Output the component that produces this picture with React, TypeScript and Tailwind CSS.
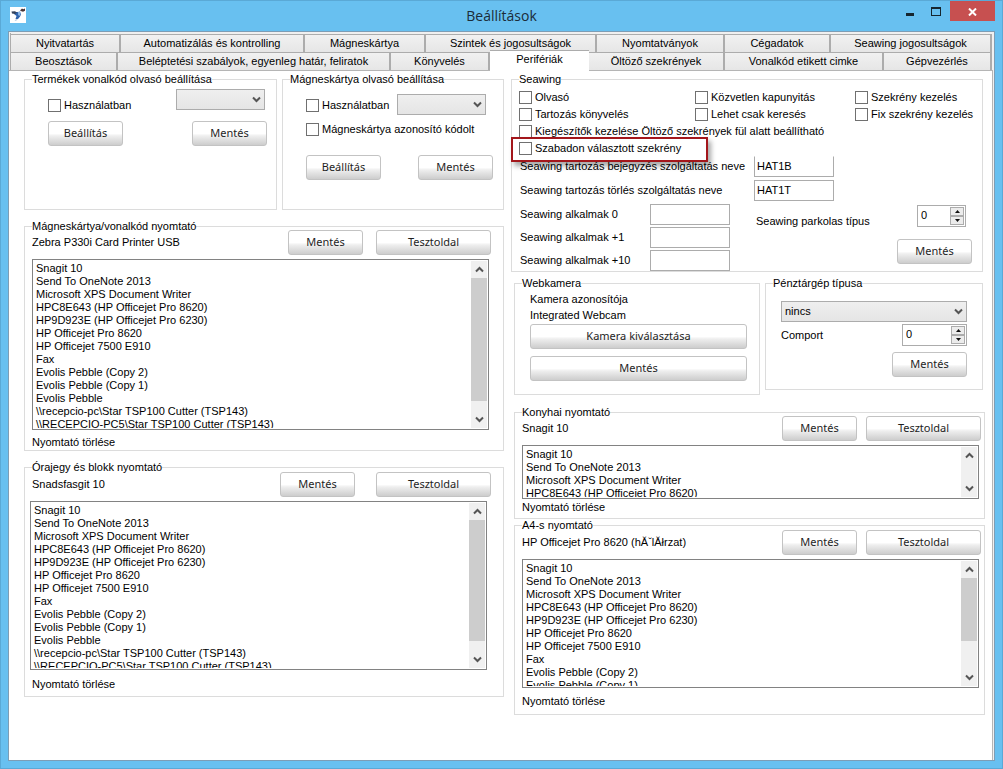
import { useId, type ReactNode } from 'react';
import clsx from 'clsx';

const PRINTERS = [
  'Snagit 10',
  'Send To OneNote 2013',
  'Microsoft XPS Document Writer',
  'HPC8E643 (HP Officejet Pro 8620)',
  'HP9D923E (HP Officejet Pro 6230)',
  'HP Officejet Pro 8620',
  'HP Officejet 7500 E910',
  'Fax',
  'Evolis Pebble (Copy 2)',
  'Evolis Pebble (Copy 1)',
  'Evolis Pebble',
  '\\\\recepcio-pc\\Star TSP100 Cutter (TSP143)',
  '\\\\RECEPCIO-PC5\\Star TSP100 Cutter (TSP143)',
];

const TOP_TABS = [
  'Nyitvatartás',
  'Automatizálás és kontrolling',
  'Mágneskártya',
  'Szintek és jogosultságok',
  'Nyomtatványok',
  'Cégadatok',
  'Seawing jogosultságok',
];

const BOTTOM_TABS = [
  'Beosztások',
  'Beléptetési szabályok, egyenleg határ, feliratok',
  'Könyvelés',
  'Perifériák',
  'Öltöző szekrények',
  'Vonalkód etikett cimke',
  'Gépvezérlés',
];

const ACTIVE_TAB = 'Perifériák';

function Tab({ name }: { name: string }) {
  const active = name === ACTIVE_TAB;
  return (
    <button
      type="button"
      role="tab"
      aria-selected={active}
      className={clsx(
        'truncate border-[#acacac]',
        active
          ? 'z-10 -mt-[2px] -mb-px border-t bg-white pb-[3px]'
          : 'border-t border-r-2 bg-linear-to-b from-[#f1f1f1] to-[#e6e6e6]',
      )}
    >
      {name}
    </button>
  );
}

function Group({
  title,
  className,
  children,
}: {
  title: string;
  className?: string;
  children: ReactNode;
}) {
  return (
    <fieldset className={clsx('min-w-0 border border-[#dcdcdc] pl-[7px]', className)}>
      <legend className="h-[13px] leading-[13px]">{title}</legend>
      {children}
    </fieldset>
  );
}

function PushButton({ className, children }: { className?: string; children: ReactNode }) {
  return (
    <button
      type="button"
      className={clsx(
        "h-[25px] shrink-0 rounded-[3px] border border-[#c3c3c3] bg-linear-to-b from-white from-50% via-[#efefef] via-60% to-[#cdcdcd] pb-[2px] font-['Noto_Sans','Open_Sans',sans-serif] text-[11px] text-[#1e1e1e]",
        className,
      )}
    >
      {children}
    </button>
  );
}

function Check({ label, className }: { label: string; className?: string }) {
  return (
    <label className={clsx('flex h-[13px] items-center gap-[3px] whitespace-nowrap', className)}>
      <input
        type="checkbox"
        className="size-[13px] shrink-0 appearance-none border border-[#707070] bg-white"
      />
      {label}
    </label>
  );
}

function Chevron({ up, className }: { up?: boolean; className?: string }) {
  return (
    <svg viewBox="0 0 9 7" className={clsx('h-[7px] w-[9px]', className)} aria-hidden="true">
      <path
        d={up ? 'M1 5.5 4.5 2 8 5.5' : 'M1 1.5 4.5 5 8 1.5'}
        fill="none"
        stroke="#555"
        strokeWidth="2"
      />
    </svg>
  );
}

function Dropdown({
  label,
  value,
  className,
}: {
  label: string;
  value: string;
  className?: string;
}) {
  return (
    <div className={clsx('relative h-[21px]', className)}>
      <select
        aria-label={label}
        defaultValue={value}
        className="block h-full w-full appearance-none border border-[#acacac] bg-linear-to-b from-[#efefef] to-[#e5e5e5] px-[3px]"
      >
        <option value={value}>{value}</option>
      </select>
      <Chevron className="pointer-events-none absolute top-[7px] right-1" />
    </div>
  );
}

function Spinner({ id, className }: { id: string; className?: string }) {
  return (
    <div className={clsx('flex h-[22px] border border-[#acacac] bg-white p-px', className)}>
      <input
        id={id}
        type="number"
        defaultValue={0}
        className="w-0 min-w-0 flex-1 appearance-none pb-[2px] pl-[2px] outline-none [-moz-appearance:textfield] [&::-webkit-inner-spin-button]:appearance-none"
      />
      <div className="flex w-[14px] flex-col">
        {['Növelés', 'Csökkentés'].map((name, i) => (
          <button
            key={name}
            type="button"
            aria-label={name}
            className="flex flex-1 items-center justify-center border border-[#acacac] bg-[#ececec]"
          >
            <svg viewBox="0 0 5 3" className="h-[3px] w-[5px]" aria-hidden="true">
              <path d={i === 0 ? 'M0 3 2.5 0 5 3z' : 'M0 0 2.5 3 5 0z'} fill="#111" />
            </svg>
          </button>
        ))}
      </div>
    </div>
  );
}

function TextField({ id, value = '', className }: { id: string; value?: string; className?: string }) {
  return (
    <input
      id={id}
      defaultValue={value}
      className={clsx(
        'h-[21px] w-20 border border-[#acacac] bg-white px-[2px] pb-px outline-none',
        className,
      )}
    />
  );
}

function PrinterList({
  label,
  className,
  thumb,
}: {
  label: string;
  className: string;
  thumb?: string;
}) {
  return (
    <div className={clsx('flex border border-[#828282] bg-white p-px', className)}>
      <select
        size={4}
        aria-label={label}
        className="h-full min-w-0 flex-1 appearance-none overflow-y-auto pt-px outline-none [scrollbar-width:none]"
      >
        {PRINTERS.map((p) => (
          <option key={p} className="h-[13px] min-h-0 p-0 pl-[2px] leading-[13px]">
            {p}
          </option>
        ))}
      </select>
      <div className="flex w-4 flex-col bg-[#f0f0f0]" aria-hidden="true">
        <div className="flex h-[17px] items-center justify-center">
          <Chevron up />
        </div>
        <div className={clsx('bg-[#cdcdcd]', thumb)} />
        <div className="mt-auto flex h-[17px] items-center justify-center">
          <Chevron />
        </div>
      </div>
    </div>
  );
}

function PrinterHeader({
  name,
  className,
  children,
}: {
  name: string;
  className?: string;
  children: ReactNode;
}) {
  return (
    <div className={clsx('flex items-center', className)}>
      <span className="flex-1 truncate">{name}</span>
      {children}
    </div>
  );
}

function TitleBar() {
  return (
    <header className="relative flex h-[31px] shrink-0 items-start justify-end">
      <svg viewBox="0 0 16 16" className="absolute top-[6px] left-[2px] size-4" aria-hidden="true">
        <path d="M0 0h16v16H0z" fill="#fff" />
        <path d="M4 5h5l2 1.500c0 2-1.500 4-3 5.500H5.500L6.500 9 4 7z" fill="#2f64ad" />
        <path d="M1.500 4.500 5 4.200l2 1.300L5 7 2 6.500z" fill="#34435c" />
        <path d="M8 5l2-1 .8 2L9.500 9 8.200 8z" fill="#8eb8e4" />
        <path d="M10 3.500l2-2 1.200.8L15 1.500v2.200l-2 1-1.500-.4z" fill="#4a3436" />
        <path d="M4.500 14l1.500-2h2L6 14z" fill="#c3d3e6" />
      </svg>
      <h1 className="absolute inset-x-0 top-[5px] text-center font-['Open_Sans','Noto_Sans',sans-serif] text-[14px] leading-5 text-[#1b2c38]">
        Beállítások
      </h1>
      <button type="button" aria-label="Kis méret" className="relative flex h-5 w-[26px] justify-center pt-3">
        <span className="h-[3px] w-2 bg-[#16262f]" />
      </button>
      <button type="button" aria-label="Teljes méret" className="relative flex h-5 w-[26px] justify-center pt-[6px]">
        <span className="h-[9px] w-[10px] border border-t-2 border-[#16262f]" />
      </button>
      <button
        type="button"
        aria-label="Bezárás"
        className="relative ml-px flex h-5 w-[45px] items-center justify-center bg-[#c75050]"
      >
        <svg viewBox="0 0 9 8" className="mt-px h-2 w-[9px]" aria-hidden="true">
          <path d="M1 .5 8 7.500M8 .5 1 7.500" stroke="#fff" strokeWidth="2" fill="none" />
        </svg>
      </button>
    </header>
  );
}

function SeawingGroup() {
  const id = useId();
  return (
    <Group title="Seawing" className="relative mr-[2px] pt-[5px]">
      <div className="grid grid-cols-[176fr_160fr_127fr] gap-y-1">
        <Check label="Olvasó" />
        <Check label="Közvetlen kapunyitás" />
        <Check label="Szekrény kezelés" />
        <Check label="Tartozás könyvelés" />
        <Check label="Lehet csak keresés" />
        <Check label="Fix szekrény kezelés" />
        <Check label="Kiegészítők kezelése Öltöző szekrények fül alatt beállítható" className="col-span-3" />
        <Check label="Szabadon választott szekrény" className="col-span-3" />
      </div>
      <div className="pointer-events-none absolute top-[51px] -left-px h-[25px] w-[197px] border-2 border-[#a3161b] shadow-[3px_4px_5px_rgba(0,0,0,0.35)]" />

      <div className="mt-px flex flex-col gap-[3px] pl-px">
        <div className="flex items-center">
          <label htmlFor={`${id}-entry`} className="w-[234px]">
            Seawing tartozás bejegyzés szolgáltatás neve
          </label>
          <TextField id={`${id}-entry`} value="HAT1B" className="border-t-transparent" />
        </div>
        <div className="flex items-center">
          <label htmlFor={`${id}-delete`} className="w-[234px]">
            Seawing tartozás törlés szolgáltatás neve
          </label>
          <TextField id={`${id}-delete`} value="HAT1T" />
        </div>
      </div>

      <div className="mt-[3px] flex pl-px">
        <div className="flex flex-col gap-[2px]">
          {['0', '+1', '+10'].map((n) => (
            <div key={n} className="flex items-center">
              <label htmlFor={`${id}-use${n}`} className="w-[130px]">
                Seawing alkalmak {n}
              </label>
              <TextField id={`${id}-use${n}`} />
            </div>
          ))}
        </div>
        <div className="flex flex-1 flex-col items-end pt-px pr-[10px] pl-[26px]">
          <div className="flex w-full items-start justify-between pr-[6px]">
            <label htmlFor={`${id}-parking`} className="mt-[10px]">
              Seawing parkolas típus
            </label>
            <Spinner id={`${id}-parking`} className="w-[49px]" />
          </div>
          <PushButton className="mt-[11px] w-[75px]">Mentés</PushButton>
        </div>
      </div>
    </Group>
  );
}

function CashRegisterGroup() {
  const id = useId();
  return (
    <Group title="Pénztárgép típusa" className="pt-[11px] pr-[15px] pb-3">
      <div className="flex flex-col pl-2">
        <Dropdown label="Pénztárgép típusa" value="nincs" />
        <div className="mt-[2px] flex items-center justify-between">
          <label htmlFor={id}>Comport</label>
          <Spinner id={id} className="w-[65px]" />
        </div>
        <PushButton className="mt-[6px] w-[75px] self-end">Mentés</PushButton>
      </div>
    </Group>
  );
}

export default function App() {
  return (
    <div className="flex min-h-screen flex-col border border-[#5aa9d6] bg-[#68c0f0] px-[7px] pb-[7px] font-['Liberation_Sans',Arial,sans-serif] text-[11px] leading-[13px] text-black">
      <TitleBar />
      <main className="-mt-px flex flex-1 flex-col border border-[#7d9db5] bg-[#f0f0f0] pt-px pr-px">
        <div role="tablist" className="mr-px ml-px border-l border-[#acacac] pt-px">
          <div className="grid h-[18px] grid-cols-[110fr_184fr_121fr_171fr_128fr_106fr_161fr]">
            {TOP_TABS.map((t) => (
              <Tab key={t} name={t} />
            ))}
          </div>
          <div className="grid h-[18px] grid-cols-[107fr_273fr_99fr_99fr_136fr_159fr_108fr]">
            {BOTTOM_TABS.map((t) => (
              <Tab key={t} name={t} />
            ))}
          </div>
        </div>

        <div
          role="tabpanel"
          className="grid flex-1 grid-cols-[480fr_474fr] items-start gap-[7px] border-t border-r border-[#b5b5b5] bg-white pt-[2px] pr-[7px] pl-[15px]"
        >
          <div className="flex flex-col gap-[10px]">
            <div className="grid grid-cols-[253fr_222fr] gap-[5px]">
              <Group title="Termékek vonalkód olvasó beállítása" className="pt-[3px] pr-[9px]">
                <div className="pl-4">
                  <div className="flex justify-between pr-[2px]">
                    <Check label="Használatban" className="mt-[10px]" />
                    <Dropdown label="Vonalkód olvasó port" value="" className="w-[89px]" />
                  </div>
                  <div className="mt-[9px] flex justify-between">
                    <PushButton className="w-[75px]">Beállítás</PushButton>
                    <PushButton className="w-[75px]">Mentés</PushButton>
                  </div>
                </div>
              </Group>
              <Group title="Mágneskártya olvasó beállítása" className="pt-2 pr-[10px] pb-[29px]">
                <div className="pl-4">
                  <div className="flex justify-between pr-[7px]">
                    <Check label="Használatban" className="mt-[5px]" />
                    <Dropdown label="Mágneskártya olvasó port" value="" className="w-[89px]" />
                  </div>
                  <Check label="Mágneskártya azonosító kódolt" className="mt-2" />
                  <div className="mt-[19px] flex justify-between">
                    <PushButton className="w-[75px]">Beállítás</PushButton>
                    <PushButton className="w-[75px]">Mentés</PushButton>
                  </div>
                </div>
              </Group>
            </div>

            <Group title="Mágneskártya/vonalkód nyomtató" className="pr-3 pb-px">
              <PrinterHeader name="Zebra P330i Card Printer USB" className="-mt-[3px]">
                <PushButton className="w-[75px]">Mentés</PushButton>
                <PushButton className="ml-[13px] w-[115px]">Tesztoldal</PushButton>
              </PrinterHeader>
              <PrinterList label="Mágneskártya nyomtatók" className="mt-1 mr-[2px] h-[171px]" thumb="h-[123px]" />
              <p className="mt-[6px]">Nyomtató törlése</p>
            </Group>

            <Group title="Órajegy és blokk nyomtató" className="pr-3 pb-[5px]">
              <PrinterHeader name="Snadsfasgit 10" className="-mt-[2px]">
                <PushButton className="w-[75px]">Mentés</PushButton>
                <PushButton className="ml-[21px] w-[115px]">Tesztoldal</PushButton>
              </PrinterHeader>
              <PrinterList label="Órajegy nyomtatók" className="mt-1 mr-1 -ml-[2px] h-[169px]" thumb="h-[121px]" />
              <p className="mt-2">Nyomtató törlése</p>
            </Group>
          </div>

          <div className="flex flex-col">
            <SeawingGroup />
            <div className="flex flex-col pl-[3px]">
              <div className="mt-[5px] mr-[2px] grid grid-cols-[246fr_218fr] items-start gap-[5px]">
                <Group title="Webkamera" className="pt-px pr-3 pb-[13px]">
                  <div className="flex flex-col pl-2">
                    <p className="leading-4">Kamera azonosítója</p>
                    <p className="leading-4">Integrated Webcam</p>
                    <PushButton className="mt-px">Kamera kiválasztása</PushButton>
                    <PushButton className="mt-[7px]">Mentés</PushButton>
                  </div>
                </Group>
                <CashRegisterGroup />
              </div>

              <Group title="Konyhai nyomtató" className="mt-[11px] pr-[3px] pb-1">
                <PrinterHeader name="Snagit 10" className="-mt-[3px]">
                  <PushButton className="w-[75px]">Mentés</PushButton>
                  <PushButton className="ml-[9px] w-[115px]">Tesztoldal</PushButton>
                </PrinterHeader>
                <PrinterList label="Konyhai nyomtatók" className="mt-1 mr-[2px] h-[54px]" />
                <p className="mt-[2px]">Nyomtató törlése</p>
              </Group>

              <Group title="A4-s nyomtató" className="pr-[3px] pb-[6px]">
                <PrinterHeader name="HP Officejet Pro 8620 (hĂˇlĂłrzat)" className="-mt-[2px]">
                  <PushButton className="w-[75px]">Mentés</PushButton>
                  <PushButton className="ml-[9px] w-[115px]">Tesztoldal</PushButton>
                </PrinterHeader>
                <PrinterList label="A4-s nyomtatók" className="mt-1 mr-[2px] h-[129px]" thumb="h-[63px]" />
                <p className="mt-[7px]">Nyomtató törlése</p>
              </Group>
            </div>
          </div>
        </div>
      </main>
    </div>
  );
}
